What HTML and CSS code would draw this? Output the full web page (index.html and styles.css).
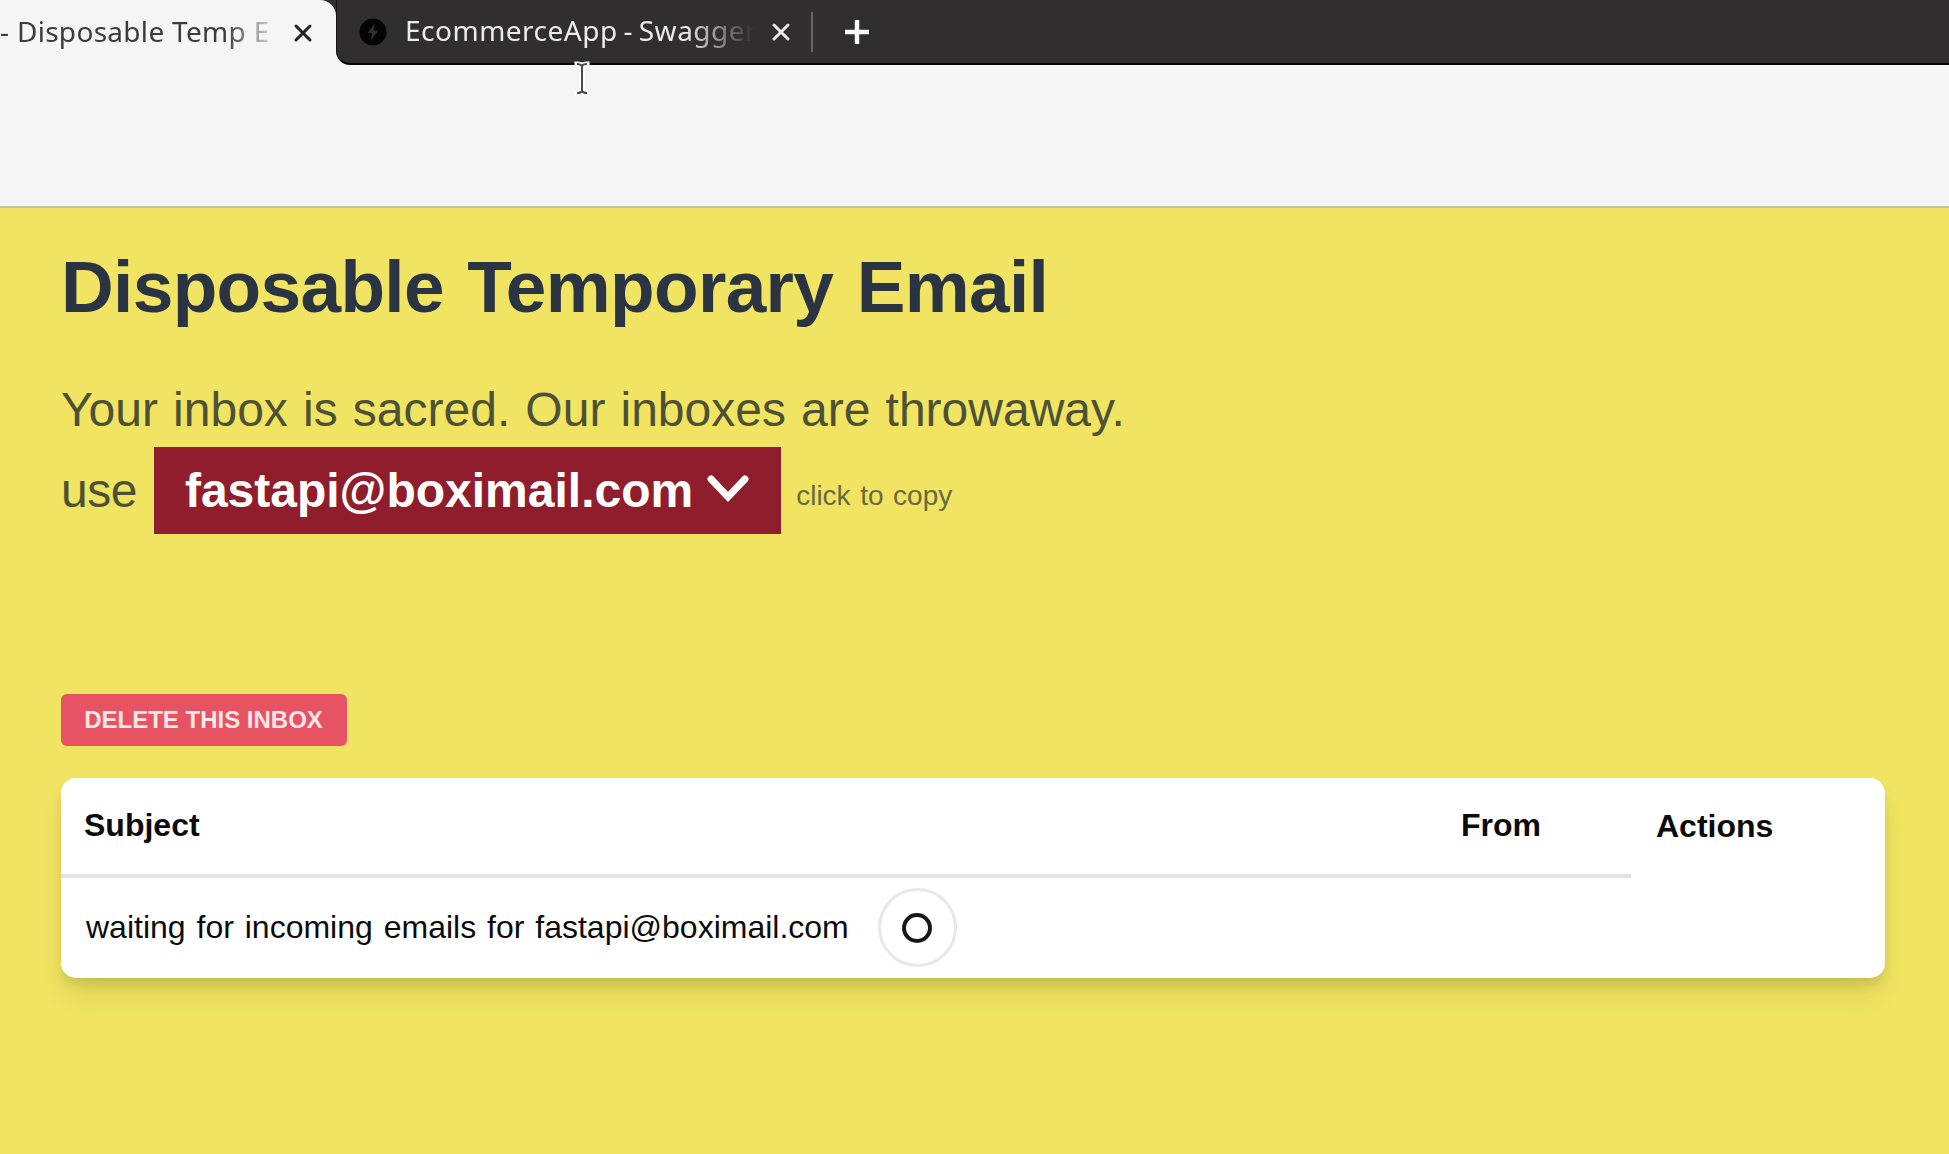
FILE: index.html
```html
<!DOCTYPE html>
<html lang="en">
<head>
<meta charset="utf-8">
<title>Disposable Temp Email</title>
<link rel="stylesheet" href="styles.css">
</head>
<body>
<header class="browser">
  <div class="tabstrip">
    <div class="tab tab-active">
      <span class="tab-title title-active">- Disposable Temp E</span>
      <svg class="close close-dark" viewBox="0 0 18 18"><path d="M2 2L16 16M16 2L2 16"/></svg>
    </div>
    <div class="strip-rest">
      <div class="strip-dark">
        <svg class="favicon" viewBox="0 0 28 28"><circle cx="14" cy="14" r="13.5" fill="#050404"/><path d="M15.6 5.5L8.5 15.2H13L12 22.5L19.3 12.6H14.6Z" fill="#312e2f"/></svg>
        <span class="tab-title title-other">EcommerceApp - Swagger</span>
        <svg class="close close-light" viewBox="0 0 18 18"><path d="M2 2L16 16M16 2L2 16"/></svg>
        <span class="divider"></span>
        <svg class="plus" viewBox="0 0 26 26"><path d="M13 1V25M1 13H25"/></svg>
      </div>
    </div>
  </div>
  <div class="toolbar"></div>
  <svg class="cursor" viewBox="0 0 16 38"><path class="cursor-edge" d="M3 4Q7 4 8 6Q9 4 13 4M8 6V31M3 33Q7 33 8 31Q9 33 13 33"/><path class="cursor-core" d="M3 4Q7 4 8 6Q9 4 13 4M8 6V31M3 33Q7 33 8 31Q9 33 13 33"/></svg>
</header>
<main class="page">
  <h1 class="heading">Disposable Temporary Email</h1>
  <p class="tagline">Your inbox is sacred. Our inboxes are throwaway.</p>
  <div class="address-row">
    <span class="use">use</span>
    <button class="address"><span class="address-text">fastapi@boximail.com</span><svg class="chevron" viewBox="0 0 42 28"><path d="M4 4L21 22L38 4"/></svg></button>
    <span class="hint">click to copy</span>
  </div>
  <button class="delete">DELETE THIS INBOX</button>
  <section class="inbox">
    <div class="inbox-head">
      <div class="col-main"><span class="th-subject">Subject</span><span class="th-from">From</span></div>
      <span class="th-actions">Actions</span>
    </div>
    <div class="inbox-row">
      <span class="waiting">waiting for incoming emails for fastapi@boximail.com</span>
      <span class="spinner"><span class="spinner-core"></span></span>
    </div>
  </section>
</main>
</body>
</html>
```

FILE: styles.css
```css
* { box-sizing: border-box; }
body { margin: 0; background: #f0e462; font-family: "Liberation Sans", Arial, sans-serif; }
button { border: 0; font-family: inherit; }
.browser { position: relative; height: 208px; background: #f5f5f5; border-bottom: 2px solid #c3c2b0; }
.tabstrip { display: flex; height: 65px; background: #312e2f; font-family: "Noto Sans", sans-serif; }
.tab-active { display: flex; align-items: center; width: 336px; background: #f5f5f5; border-radius: 0 16px 0 0; }
.strip-rest { flex: 1; background: #f5f5f5; }
.strip-dark { display: flex; align-items: center; height: 65px; background: #312e2f; border-bottom: 2px solid #050404; border-left: 1px solid #151314; border-bottom-left-radius: 14px; }
.tab-title { display: block; white-space: nowrap; font-size: 28px; line-height: 60px; padding-bottom: 3px; }
.title-active { width: 276px; color: #3c3c3c; letter-spacing: .3px; -webkit-mask-image: linear-gradient(90deg, #000 225px, transparent 282px); mask-image: linear-gradient(90deg, #000 225px, transparent 282px); }
.close { width: 18px; height: 18px; fill: none; stroke-width: 3; stroke-linecap: round; }
.close-dark { margin-left: 18px; stroke: #222; }
.favicon { width: 28px; height: 28px; margin-left: 22px; }
.title-other { overflow: hidden; width: 349px; margin-left: 18px; color: #ececec; letter-spacing: .5px; word-spacing: -2px; -webkit-mask-image: linear-gradient(90deg, #000 280px, transparent 350px); mask-image: linear-gradient(90deg, #000 280px, transparent 350px); }
.close-light { margin-left: 18px; stroke: #ececec; }
.divider { width: 2px; height: 40px; margin-left: 21px; background: #696667; }
.plus { width: 26px; height: 26px; margin-left: 31px; fill: none; stroke: #fff; stroke-width: 4.4; }
.cursor { position: absolute; left: 574px; top: 60px; width: 16px; height: 38px; fill: none; }
.cursor-edge { stroke: #fff; stroke-width: 5; stroke-linecap: square; }
.cursor-core { stroke: #4a4a4a; stroke-width: 2; }
.page { min-height: 946px; padding: 34px 64px 0 61px; }
.heading { margin: 0; font-size: 73px; line-height: 90px; letter-spacing: -.65px; word-spacing: 3.7px; color: #2a3443; white-space: nowrap; }
.tagline { margin: 46px 0 0; font-size: 48px; line-height: 64px; word-spacing: 1.8px; color: #4d5135; white-space: nowrap; }
.address-row { display: flex; align-items: center; height: 88px; margin-top: 4px; font-size: 48px; color: #4d5135; }
.use { letter-spacing: -.5px; }
.address { display: flex; align-items: center; height: 87px; margin-left: 17px; padding: 0 31px; background: #8f1d2b; color: #fff; font-size: 48px; font-weight: bold; }
.chevron { width: 42px; height: 28px; margin: 0 1px 3px 14px; fill: none; stroke: #fff; stroke-width: 7; stroke-linecap: round; }
.hint { margin: 12px 0 0 15px; font-size: 28px; word-spacing: 1.8px; color: #6a6a3e; }
.delete { display: flex; align-items: center; justify-content: center; width: 286px; height: 52px; margin-top: 160px; padding: 0 1px 1px 0; border-radius: 6px; background: #e65463; color: #ffe7e7; font-size: 24px; font-weight: bold; white-space: nowrap; }
.inbox { height: 200px; margin-top: 32px; border-radius: 15px; background: #fff; color: #0b0b0b; font-size: 32px; box-shadow: 0 20px 30px -6px rgba(60,60,0,.12), 0 8px 12px -2px rgba(60,60,0,.14); }
.inbox-head { display: flex; height: 100px; font-weight: bold; }
.col-main { display: flex; width: 1570px; padding: 0 0 2px 23px; align-items: center; border-bottom: 4px solid #e2e2e2; }
.th-subject { width: 1377px; }
.th-actions { margin: 30px 0 0 25px; }
.inbox-row { display: flex; align-items: center; height: 99px; padding-left: 25px; word-spacing: 2px; }
.spinner { display: flex; align-items: center; justify-content: center; width: 79px; height: 79px; margin-left: 29px; border: 3px solid #e8e8e8; border-radius: 50%; }
.spinner-core { width: 30px; height: 30px; border: 4px solid #181818; border-radius: 50%; }
```
